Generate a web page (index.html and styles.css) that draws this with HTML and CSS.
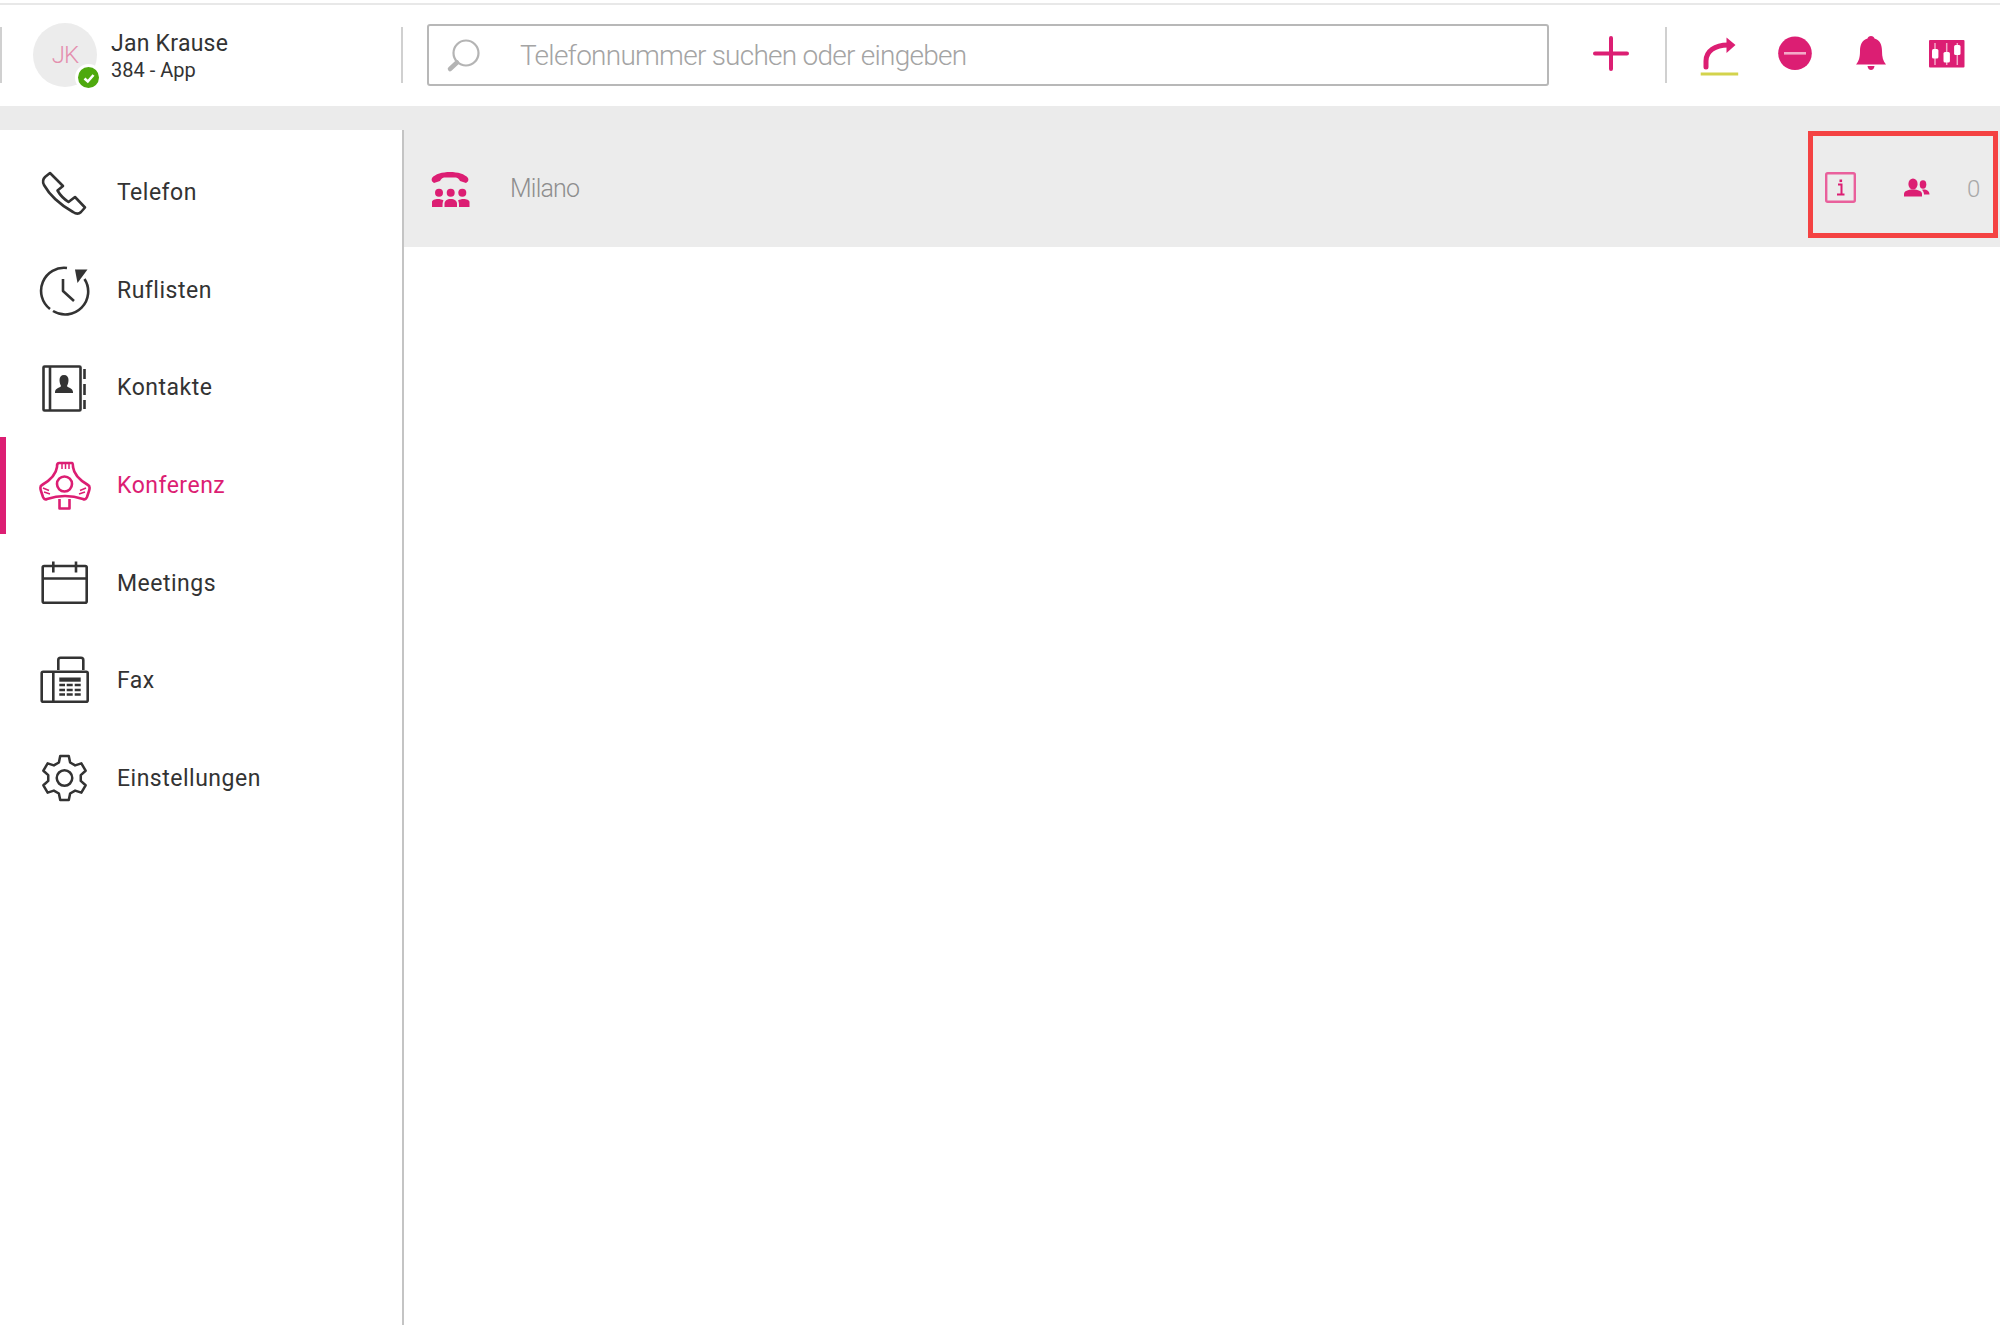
FILE: index.html
```html
<!DOCTYPE html>
<html lang="de">
<head>
    <meta charset="UTF-8">
    <title>Konferenz</title>
    <link rel="stylesheet" href="styles.css">
</head>
<body>
    <header class="topbar">
        <div class="user">
            <div class="avatar">
                <span class="initials">JK</span>
                <span class="status">
                    <svg width="14" height="14" viewBox="0 0 14 14"><path d="M2.5 7.5L5.8 10.5L11.5 4" fill="none" stroke="#fff" stroke-width="2.6"/></svg>
                </span>
            </div>
            <div class="user-text">
                <div class="user-name">Jan Krause</div>
                <div class="user-ext">384 - App</div>
            </div>
        </div>

        <div class="search">
            <svg class="search-icon" width="40" height="44" viewBox="0 0 40 44">
                <circle cx="20" cy="20" r="12.5" fill="none" stroke="#b4b4b4" stroke-width="2.2"/>
                <path d="M11 29.500L4 36" stroke="#b4b4b4" stroke-width="4.5" stroke-linecap="round"/>
            </svg>
            <div class="search-text">Telefonnummer suchen oder eingeben</div>
        </div>

        <svg class="add-icon" width="44" height="44" viewBox="0 0 44 44">
            <path d="M22 5V36M6 20.500H38" stroke="#dc1e73" stroke-width="4" stroke-linecap="round"/>
        </svg>
        <div class="divider"></div>
        <div class="actions">
            <svg width="44" height="44" viewBox="0 0 44 44">
                <path d="M9 34V28C9 18 18 12 31 12" fill="none" stroke="#dc1e73" stroke-width="5" stroke-linecap="round"/>
                <path d="M29.500 4.500L38.500 12L29.500 20Z" fill="#dc1e73"/>
                <rect x="3.700" y="39.500" width="37.500" height="3" fill="#d3d34c"/>
            </svg>
            <svg width="44" height="44" viewBox="0 0 44 44">
                <circle cx="22" cy="20.300" r="16.800" fill="#dc1e73"/>
                <rect x="11" y="19" width="22" height="2.600" fill="#f3a9c8"/>
            </svg>
            <svg width="44" height="44" viewBox="0 0 44 44">
                <path d="M22 3C24 3 25 4 25.500 5.500C31 7 33 12 33 18C33 24 34 28 37 31.500H7C10 28 11 24 11 18C11 12 13 7 18.500 5.500C19 4 20 3 22 3Z" fill="#dc1e73"/>
                <path d="M18.500 33H25.500C25 36 23.500 37 22 37C20.500 37 19 36 18.500 33Z" fill="#dc1e73"/>
            </svg>
            <svg width="44" height="44" viewBox="0 0 44 44">
                <rect x="4" y="7" width="35.500" height="27.500" rx="1" fill="#dc1e73"/>
                <path d="M10 10V32M21.700 10V32M32.300 10V32" stroke="#f3a9c8" stroke-width="1.500"/>
                <rect x="7" y="16" width="6.400" height="9.500" rx="1.500" fill="#fff"/>
                <rect x="18.500" y="19" width="6.400" height="10.500" rx="1.500" fill="#fff"/>
                <rect x="29.100" y="12" width="6.400" height="10" rx="1.500" fill="#fff"/>
            </svg>
        </div>
    </header>

    <div class="band"></div>

    <div class="main">
        <nav class="sidebar">
            <a class="nav-item">
                <svg class="nav-icon" width="52" height="52" viewBox="0 0 52 52">
                    <path d="M11 7L24 20L18.500 24.500C21 29 25 33 29.500 36L36 31L46 41.500L42 46C40 48 37 48 34 46C20 38 10 28 5 19C3 15 4 13 6 11Z"/>
                </svg>
                <span>Telefon</span>
            </a>
            <a class="nav-item">
                <svg class="nav-icon" width="52" height="52" viewBox="0 0 52 52">
                    <path d="M45.500 15A23 23 0 0 1 14 47"/>
                    <path d="M11 45A23 23 0 0 1 28 4"/>
                    <path d="M24 15V27L35 37"/>
                    <path d="M36 5.500H48.500L38.500 19Z" class="solid"/>
                </svg>
                <span>Ruflisten</span>
            </a>
            <a class="nav-item">
                <svg class="nav-icon" width="52" height="52" viewBox="0 0 52 52">
                    <rect x="4.500" y="4.500" width="37" height="44" rx="1"/>
                    <path d="M11 4.500V48.500"/>
                    <path d="M45.500 7V17M45.500 22V33M45.500 38V47"/>
                    <path class="solid" d="M25 13C28 13 29.500 15 29.500 18C29.500 21 28.500 23 28 24C28 25.500 34 26 34 30V31H16V30C16 26 22 25.500 22 24C21.500 23 20.500 21 20.500 18C20.500 15 22 13 25 13Z"/>
                </svg>
                <span>Kontakte</span>
            </a>
            <a class="nav-item active">
                <svg class="nav-icon" width="52" height="52" viewBox="0 0 52 52">
                    <path d="M20 4H33C34 4 34 6 34 8C35 16 42 22 49 26C51 27 51 29 50 32L48 38C47 40 46 41 44 40C32 36 20 36 8 40C6 41 5 40 4 38L2 32C1 29 1 27 3 26C10 22 17 16 18 8C18 6 18 4 20 4Z"/>
                    <circle cx="25.500" cy="25" r="7.500"/>
                    <path d="M20.500 40V49.500H30.500V40"/>
                    <path d="M23 4V10M26.500 4V10M30 4V10M4 29L10 31.500M5 33L11 35M47 29L41 31.500M46 33L40 35" stroke-width="1.500"/>
                </svg>
                <span>Konferenz</span>
            </a>
            <a class="nav-item">
                <svg class="nav-icon" width="52" height="52" viewBox="0 0 52 52">
                    <rect x="3.700" y="9" width="44" height="36.700" rx="1.500"/>
                    <path d="M3.700 21.500H47.700M14.300 4.500V15.500M37 4.500V15.500"/>
                </svg>
                <span>Meetings</span>
            </a>
            <a class="nav-item">
                <svg class="nav-icon" width="52" height="52" viewBox="0 0 52 52">
                    <rect x="2.700" y="16.700" width="46" height="30" rx="1.500"/>
                    <path d="M14.300 16.700V46.700M19.300 15V5C19.300 3.500 20 2.700 21.500 2.700H42C43.500 2.700 44.300 3.500 44.300 5V15"/>
                    <rect class="solid" x="20.300" y="22.500" width="21.400" height="4.200"/>
                    <path class="keys" d="M20.300 30H26M27.700 30H33.700M35.700 30H41.700M20.300 35H26M27.700 35H33.700M35.700 35H41.700M20.300 39.500H26M27.700 39.500H33.700M35.700 39.500H41.700"/>
                </svg>
                <span>Fax</span>
            </a>
            <a class="nav-item">
                <svg class="nav-icon" width="52" height="52" viewBox="0 0 52 52">
                    <g transform="translate(25.500 26) scale(0.97)">
                        <polygon points="-5.800,-16 -4.400,-22.600 4.400,-22.600 5.800,-16 10.960,-13.020 17.370,-15.110 21.770,-7.490 16.760,-2.980 16.760,2.980 21.770,7.490 17.370,15.110 10.960,13.020 5.800,16 4.400,22.600 -4.400,22.600 -5.800,16 -10.960,13.020 -17.370,15.110 -21.770,7.490 -16.760,2.980 -16.760,-2.980 -21.770,-7.490 -17.370,-15.110 -10.960,-13.020"/>
                        <circle r="8"/>
                    </g>
                </svg>
                <span>Einstellungen</span>
            </a>
        </nav>

        <section class="content">
            <div class="conf-row">
                <svg width="44" height="44" viewBox="0 0 44 44">
                    <path d="M3 11C9 3 33 3 39 11C40 13 39 15 37 16L31 14C30 12 29 11 27 10.500H15C13 11 12 12 11 14L5 16C3 15 2 13 3 11Z" fill="#dc1e73"/>
                    <circle cx="10" cy="25.700" r="4" fill="#dc1e73"/>
                    <circle cx="21.700" cy="25.700" r="4" fill="#dc1e73"/>
                    <circle cx="33.300" cy="25.700" r="4" fill="#dc1e73"/>
                    <path d="M3 40V35C3 33 6 32 9 32C11 32 13 32.500 14.500 33.500C13.500 35 13.500 37 13.500 40Z" fill="#dc1e73"/>
                    <path d="M15.500 40V37C15.500 33.500 18 32 21.700 32C25.500 32 28 33.500 28 37V40Z" fill="#dc1e73"/>
                    <path d="M40.500 40V35C40.500 33 37.500 32 34.500 32C32.500 32 30.500 32.500 29 33.500C30 35 30 37 30 40Z" fill="#dc1e73"/>
                </svg>
                <span class="conf-name">Milano</span>
                <div class="conf-tools">
                    <svg width="31" height="31" viewBox="0 0 31 31">
                        <rect x="1.200" y="1.200" width="28.600" height="28.600" rx="1.500" fill="none" stroke="#e9609c" stroke-width="2.400"/>
                        <path d="M13 12.500H16.500V22.500M12 22.500H19.500" fill="none" stroke="#dc1e73" stroke-width="2"/>
                        <rect x="14.500" y="7.500" width="2.600" height="2.600" fill="#dc1e73"/>
                    </svg>
                    <svg width="26" height="20" viewBox="0 0 26 20">
                        <ellipse cx="19" cy="6.500" rx="3.300" ry="4.200" fill="#dc1e73"/>
                        <path d="M18 11.800C22 11 25.500 13 25.500 16.500H20C20 14.500 19 13 18 11.800Z" fill="#dc1e73"/>
                        <ellipse cx="9" cy="6" rx="4.600" ry="5.500" fill="#dc1e73"/>
                        <path d="M0 18.500V16C0 13 4 11.500 9 11.500C14 11.500 18 13 18 16V18.500Z" fill="#dc1e73"/>
                    </svg>
                    <span class="conf-count">0</span>
                </div>
            </div>
        </section>
    </div>
</body>
</html>
```

FILE: styles.css
```css
* {
    box-sizing: border-box;
}
body {
    margin: 0;
    height: 1325px;
    overflow: hidden;
    background: #fff;
    font-family: Roboto, "Liberation Sans", sans-serif;
    color: #333;
    display: flex;
    flex-direction: column;
}
svg {
    display: block;
    flex: none;
}
.topbar {
    height: 103px;
    margin-top: 3px;
    padding-bottom: 1px;
    border-top: 2px solid #e8e8e8;
    display: flex;
    align-items: center;
}
.user {
    width: 403px;
    height: 56px;
    display: flex;
    align-items: center;
    padding-left: 31px;
    border-left: 2px solid #d0d0d0;
    border-right: 2px solid #d0d0d0;
}
.avatar {
    position: relative;
    width: 64px;
    height: 64px;
    border-radius: 50%;
    background: #ececec;
    display: flex;
    align-items: center;
    justify-content: center;
}
.initials {
    color: #e48fae;
    font-size: 24px;
    font-weight: 300;
    letter-spacing: -1px;
}
.status {
    position: absolute;
    right: -5px;
    bottom: -4px;
    width: 27px;
    height: 27px;
    border: 3px solid #fff;
    border-radius: 50%;
    background: #4ea90e;
    display: flex;
    align-items: center;
    justify-content: center;
}
.user-text {
    margin-left: 14px;
    padding-top: 2px;
}
.user-name {
    font-size: 23px;
    line-height: 28px;
    letter-spacing: 0.25px;
}
.user-ext {
    font-size: 20px;
    line-height: 24px;
}
.search {
    width: 1122px;
    height: 62px;
    margin-left: 24px;
    border: 2px solid #b8b8b8;
    border-radius: 3px;
    display: flex;
    align-items: center;
    padding-left: 17px;
}
.search-text {
    margin-left: 34px;
    font-size: 28px;
    font-weight: 300;
    letter-spacing: -0.75px;
    color: #a4a4a4;
}
.add-icon {
    margin-left: 40px;
}
.divider {
    width: 2px;
    height: 56px;
    margin-left: 32px;
    background: #d0d0d0;
}
.actions {
    display: flex;
    gap: 32px;
    margin-left: 30px;
}
.band {
    height: 24px;
    background: #ebebeb;
    flex: none;
}
.main {
    flex: 1;
    display: flex;
}
.sidebar {
    width: 404px;
    flex: none;
    padding-top: 13.500px;
    border-right: 2px solid #c4c4c4;
}
.nav-item {
    height: 97.700px;
    display: flex;
    align-items: center;
    gap: 26px;
    padding-left: 33px;
    border-left: 6px solid transparent;
    font-size: 23px;
    letter-spacing: 0.5px;
    color: #333;
}
.nav-icon {
    fill: none;
    stroke: #333;
    stroke-width: 2.600;
    stroke-linejoin: round;
}
.nav-icon .solid {
    fill: #333;
    stroke: none;
}
.nav-icon .keys {
    stroke-width: 2.600;
}
.nav-item.active {
    border-left-color: #dc1e73;
    color: #dc1e73;
}
.nav-item.active .nav-icon {
    stroke: #dc1e73;
}
.content {
    flex: 1;
}
.conf-row {
    height: 117px;
    background: #ececec;
    display: flex;
    align-items: center;
    padding-left: 25px;
}
.conf-name {
    margin-left: 37px;
    font-size: 25px;
    font-weight: 300;
    letter-spacing: -0.8px;
    color: #8e8e8e;
}
.conf-tools {
    width: 190px;
    height: 107px;
    margin-left: auto;
    margin-right: 2px;
    align-self: flex-start;
    margin-top: 1px;
    border: 5px solid #f44242;
    display: flex;
    align-items: center;
    padding: 6px 0 0 12px;
}
.conf-tools svg:nth-child(2) {
    margin-left: 48px;
}
.conf-count {
    margin-left: 37px;
    margin-top: 3px;
    font-size: 24px;
    font-weight: 300;
    color: #a8a8a8;
}
```
